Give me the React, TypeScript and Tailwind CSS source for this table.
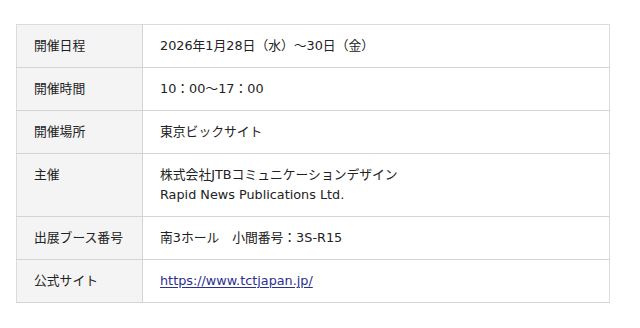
import React from 'react';

interface Row {
  label: string;
  value: React.ReactNode;
}

const rows: Row[] = [
  { label: '開催日程', value: '2026年1月28日（水）～30日（金）' },
  { label: '開催時間', value: '10：00～17：00' },
  { label: '開催場所', value: '東京ビックサイト' },
  {
    label: '主催',
    value: (
      <>
        株式会社JTBコミュニケーションデザイン
        <br />
        Rapid News Publications Ltd.
      </>
    ),
  },
  { label: '出展ブース番号', value: '南3ホール　小間番号：3S-R15' },
  {
    label: '公式サイト',
    value: (
      <a href="#" className="text-[#2b2f8f] underline underline-offset-2">
        https://www.tctjapan.jp/
      </a>
    ),
  },
];

export default function App() {
  return (
    <div
      className="w-[640px] h-[328px] bg-white pt-[24px] pl-[16px] pr-[30px]"
      style={{ fontFamily: '"DejaVu Sans", "Noto Sans CJK JP", sans-serif' }}
    >
      <table className="w-full border-collapse border border-[#dcdcdc] text-[12.8px] leading-[20px] text-[#222]">
        <tbody>
          {rows.map((row) => (
            <tr key={row.label} className="border-b border-[#d4d4d4]">
              <th className="w-[126px] bg-[#f4f4f4] border-r border-[#d4d4d4] px-[17px] py-[11px] text-left align-top font-normal">
                {row.label}
              </th>
              <td className="px-[17px] py-[11px] align-top">{row.value}</td>
            </tr>
          ))}
        </tbody>
      </table>
    </div>
  );
}
